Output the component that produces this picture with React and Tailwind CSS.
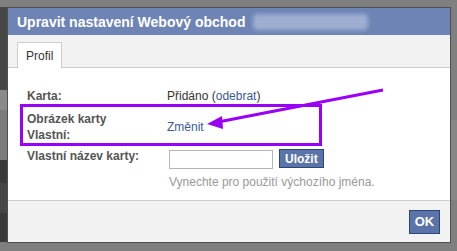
export default function App() {
  return (
    <div className="relative w-[457px] h-[251px] overflow-hidden bg-[#7f7f7f] flex font-['Liberation_Sans',Arial,sans-serif]">
      {/* page behind the overlay, left strip */}
      <div className="w-[7px] flex flex-col pt-[7px]">
        <div className="h-[83px] bg-[#474747]" />
        <div className="h-[20px] bg-[#8a8a8a]" />
        <div className="h-[50px] bg-[#7c7c7c]" />
        <div className="h-[23px] bg-[#3a3a3a]" />
        <div className="h-[30px] bg-[#454545]" />
        <div className="h-[29px] bg-[#3a3a3a]" />
      </div>

      <div className="mt-[7px] w-[444px] h-[236px] border border-[#4f4f4f] flex flex-col">
        <div className="h-[27px] bg-[#6d84b4] flex items-center pl-[9px] gap-[8px]">
          <span className="text-white font-bold text-[14px] leading-none">Upravit nastavení Webový obchod</span>
          <span className="w-[115px] h-[16px] bg-[#9eaed2] blur-[2px] rounded-sm" />
        </div>

        <div className="h-[33px] bg-[#f2f2f2] border-b border-[#cccccc] px-[9px] flex items-end">
          <div className="h-[26px] -mb-px bg-white border border-b-0 border-[#cccccc] px-[8px] flex items-center text-[12px] text-[#333]">
            Profil
          </div>
        </div>

        <div className="flex-1 bg-white pt-[20px] pl-[19px] text-[12px] leading-[16px]">
          <div className="grid grid-cols-[140px_1fr]">
            <div className="font-bold text-[#555]">Karta:</div>
            <div className="text-[#333]">
              Přidáno (<span className="text-[#3b5998]">odebrat</span>)
            </div>
          </div>
          <div className="grid grid-cols-[140px_1fr] mt-[7px] items-center">
            <div className="font-bold text-[#555]">
              Obrázek karty
              <br />
              Vlastní:
            </div>
            <div className="text-[#3b5998]">Změnit</div>
          </div>
          <div className="grid grid-cols-[140px_1fr] mt-[5px]">
            <div className="font-bold text-[#555]">Vlastní název karty:</div>
            <div className="pl-[2px]">
              <div className="flex items-start gap-[6px]">
                <div className="mt-[2px] w-[104px] h-[19px] border border-[#b5b5b5] bg-white" />
                <div className="mt-[1px] h-[19px] px-[5px] bg-[#5b74a8] border border-[#29447e] text-white font-bold flex items-center">
                  Uložit
                </div>
              </div>
              <div className="mt-[5px] text-[#999]">Vynechte pro použití výchozího jména.</div>
            </div>
          </div>
        </div>

        <div className="h-[42px] bg-[#f2f2f2] border-t border-[#cccccc] flex items-center justify-end pr-[10px]">
          <div className="w-[31px] h-[24px] bg-[#5b74a8] border border-[#29447e] text-white font-bold text-[13px] flex items-center justify-center">
            OK
          </div>
        </div>
      </div>

      {/* right strip */}
      <div className="flex-1 flex flex-col pt-[120px]">
        <div className="h-[80px] bg-[#868686]" />
      </div>

      {/* annotation */}
      <div className="absolute left-[20px] top-[104px] w-[302px] h-[42px] border-[3px] border-[#9a00f5]" />
      <svg className="absolute left-0 top-0" width="457" height="251">
        <line x1="383" y1="90" x2="218" y2="122" stroke="#9a00f5" strokeWidth="3" />
        <polygon points="207,124 222,116 223,129" fill="#9a00f5" />
      </svg>
    </div>
  )
}
